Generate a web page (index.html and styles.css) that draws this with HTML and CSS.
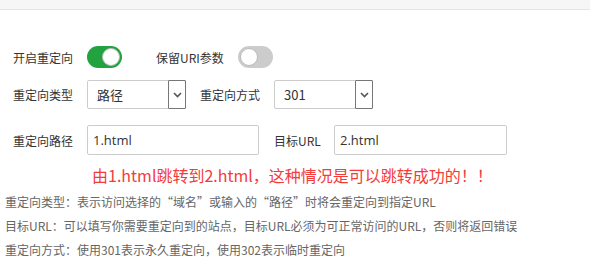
FILE: index.html
```html
<!DOCTYPE html>
<html lang="zh-CN">

<head>
    <meta charset="UTF-8" />
    <title>重定向</title>
    <link rel="stylesheet" href="styles.css">
</head>

<body>
    <div class="topbar"></div>

    <div class="panel">
        <div class="row row-switch">
            <span class="label">开启重定向</span>
            <span class="switch on"><span class="knob"></span></span>
            <span class="label label-uri">保留URI参数</span>
            <span class="switch"><span class="knob"></span></span>
        </div>

        <div class="row row-select">
            <span class="label">重定向类型</span>
            <div class="select">
                <span class="select-text">路径</span>
                <span class="select-arrow">
                    <svg width="9" height="6" viewBox="0 0 9 6"><path d="M1 1 L4.5 4.5 L8 1" fill="none" stroke="#555" stroke-width="1.6"/></svg>
                </span>
            </div>
            <span class="label label-mode">重定向方式</span>
            <div class="select">
                <span class="select-text">301</span>
                <span class="select-arrow">
                    <svg width="9" height="6" viewBox="0 0 9 6"><path d="M1 1 L4.5 4.5 L8 1" fill="none" stroke="#555" stroke-width="1.6"/></svg>
                </span>
            </div>
        </div>

        <div class="row row-input">
            <span class="label">重定向路径</span>
            <input type="text" class="text-input" value="1.html" />
            <span class="label label-target">目标URL</span>
            <input type="text" class="text-input" value="2.html" />
        </div>
    </div>

    <p class="notice">由1.html跳转到2.html，这种情况是可以跳转成功的！！</p>

    <ul class="help">
        <li>重定向类型：表示访问选择的“域名”或输入的“路径”时将会重定向到指定URL</li>
        <li>目标URL：可以填写你需要重定向到的站点，目标URL必须为可正常访问的URL，否则将返回错误</li>
        <li>重定向方式：使用301表示永久重定向，使用302表示临时重定向</li>
    </ul>
</body>

</html>
```

FILE: styles.css
```css
/* Page */

body {
    margin: 0;
    font-family: "Noto Sans CJK SC", "Noto Sans", sans-serif;
    font-size: 12px;
    color: #333;
    background: #fff;
}

.topbar {
    height: 9px;
    background: #f6f6f6;
    border-bottom: 1px solid #e4e4e4;
}
/* Form rows */

.panel {
    padding-left: 13px;
    padding-top: 36px;
}

.row {
    display: flex;
    align-items: center;
}

.row-switch {
    height: 22px;
}

.row-select {
    height: 29px;
    margin-top: 12px;
}

.row-input {
    height: 30px;
    margin-top: 16px;
}

.label {
    width: 74px;
    flex-shrink: 0;
    white-space: nowrap;
}

.label-uri {
    width: 82px;
    margin-left: 34px;
}

.label-mode {
    margin-left: 14px;
}

.label-target {
    width: 60px;
    margin-left: 15px;
}
/* Switch */

.switch {
    position: relative;
    width: 35px;
    height: 22px;
    border-radius: 11px;
    background: #ccc;
    flex-shrink: 0;
}

.switch.on {
    background: #22a33f;
}

.switch .knob {
    position: absolute;
    top: 2px;
    left: 2px;
    width: 16px;
    height: 16px;
    border-radius: 50%;
    background: #fff;
    border: 1px solid #bbb;
}

.switch.on .knob {
    left: auto;
    right: 2px;
}
/* Select */

.select {
    display: flex;
    width: 99px;
    height: 29px;
    box-sizing: border-box;
    border: 1px solid #ccc;
    border-radius: 2px;
    font-size: 13px;
    color: #333;
}

.select-text {
    flex: 1;
    padding-left: 9px;
    line-height: 27px;
}

.select-arrow {
    display: flex;
    align-items: center;
    justify-content: center;
    width: 16px;
    margin: -1px -1px -1px 0;
    border: 1px solid #777;
    border-radius: 1px;
}
/* Inputs */

.text-input {
    width: 172px;
    height: 30px;
    box-sizing: border-box;
    margin: 0;
    padding: 0 0 0 5px;
    border: 1px solid #ccc;
    border-radius: 2px;
    font-family: "Open Sans", "Noto Sans CJK SC", sans-serif;
    font-size: 13px;
    color: #333;
    outline: none;
}

.row-input .text-input:last-child {
    width: 173px;
}
/* Notice and help */

.notice {
    margin: 9px 0 0 92px;
    line-height: 22px;
    font-size: 16px;
    color: #f43b3b;
}

.help {
    list-style: none;
    margin: 4px 0 0;
    padding: 0 0 0 5px;
    color: #666;
}

.help li {
    line-height: 24px;
    white-space: nowrap;
}
```
